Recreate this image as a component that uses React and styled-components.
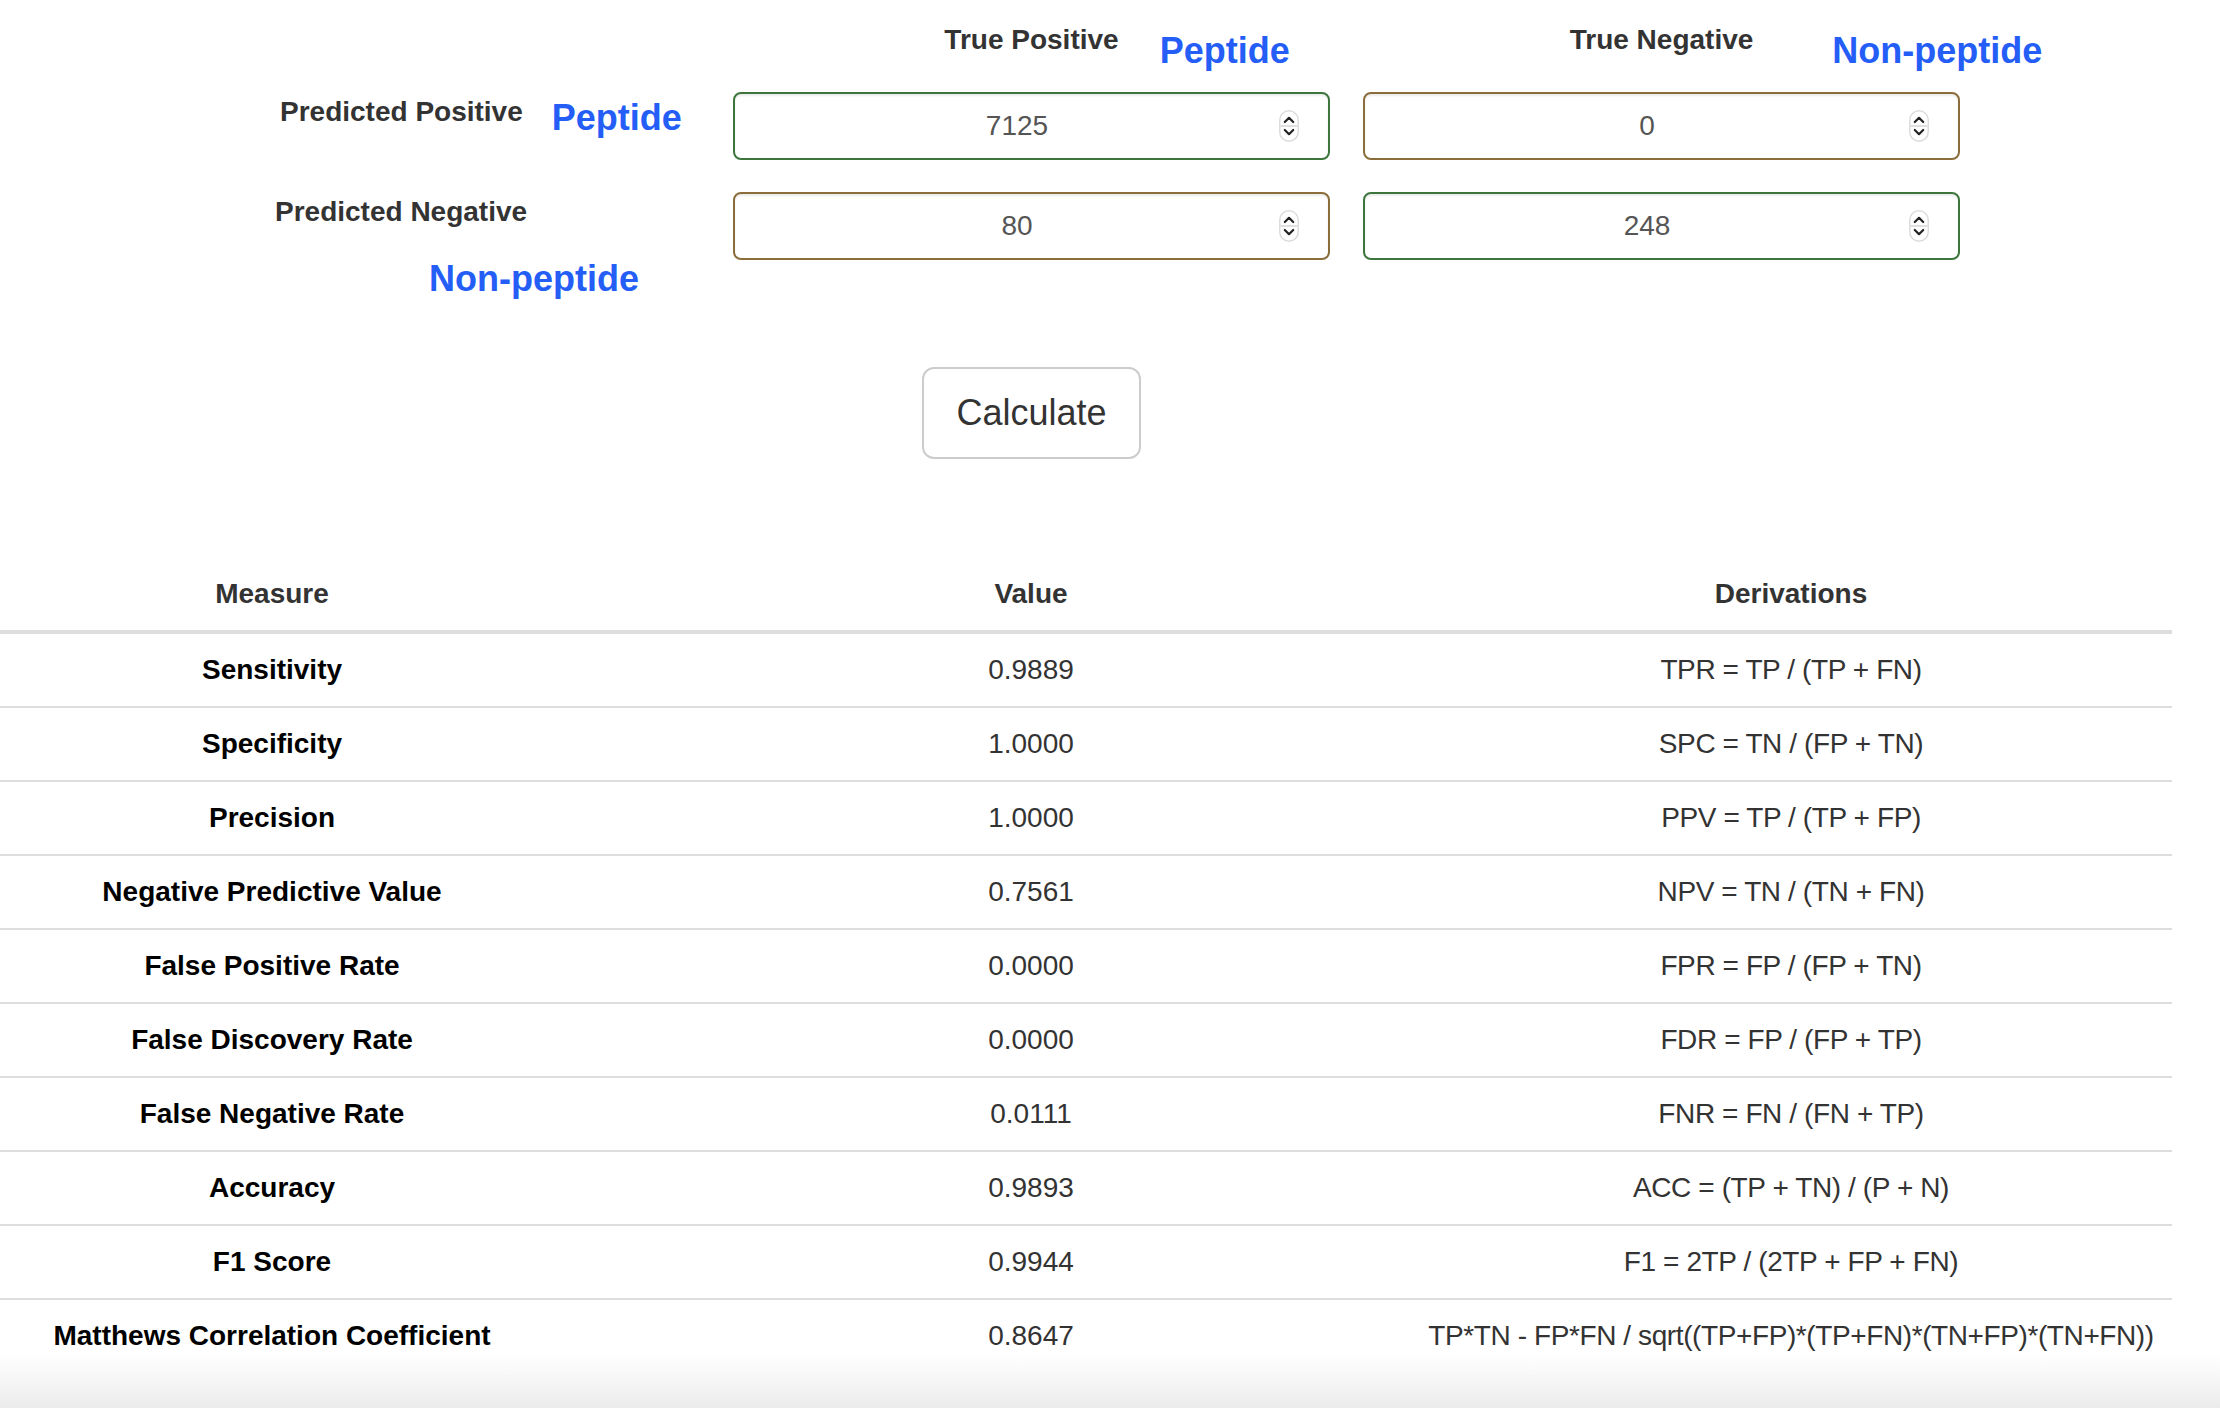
import React from 'react'
import styled, { createGlobalStyle } from 'styled-components'

const GlobalStyle = createGlobalStyle`
  html, body {
    margin: 0;
    padding: 0;
    background: #fff;
  }
  body {
    font-family: "Liberation Sans", Arial, Helvetica, sans-serif;
    color: #333;
  }
  * { box-sizing: border-box; }
`

const cells = [
  { value: 7125, tone: 'success' },
  { value: 0, tone: 'warning' },
  { value: 80, tone: 'warning' },
  { value: 248, tone: 'success' },
]

const measures = [
  ['Sensitivity', '0.9889', 'TPR = TP / (TP + FN)'],
  ['Specificity', '1.0000', 'SPC = TN / (FP + TN)'],
  ['Precision', '1.0000', 'PPV = TP / (TP + FP)'],
  ['Negative Predictive Value', '0.7561', 'NPV = TN / (TN + FN)'],
  ['False Positive Rate', '0.0000', 'FPR = FP / (FP + TN)'],
  ['False Discovery Rate', '0.0000', 'FDR = FP / (FP + TP)'],
  ['False Negative Rate', '0.0111', 'FNR = FN / (FN + TP)'],
  ['Accuracy', '0.9893', 'ACC = (TP + TN) / (P + N)'],
  ['F1 Score', '0.9944', 'F1 = 2TP / (2TP + FP + FN)'],
  ['Matthews Correlation Coefficient', '0.8647', 'TP*TN - FP*FN / sqrt((TP+FP)*(TP+FN)*(TN+FP)*(TN+FN))'],
]

function Spinner() {
  return (
    <SpinBox>
      <svg width="20" height="32" viewBox="0 0 20 32">
        <rect x="0.75" y="0.75" width="18.5" height="30.5" rx="9.25" fill="#fff" stroke="#dcdcdc" strokeWidth="1.5" />
        <line x1="1.5" y1="16" x2="18.5" y2="16" stroke="#d6d6d6" strokeWidth="1.5" />
        <polyline points="5.8,12 10,7.8 14.2,12" fill="none" stroke="#222" strokeWidth="2.2" strokeLinecap="round" strokeLinejoin="round" />
        <polyline points="5.8,20 10,24.2 14.2,20" fill="none" stroke="#222" strokeWidth="2.2" strokeLinecap="round" strokeLinejoin="round" />
      </svg>
    </SpinBox>
  )
}

function CountInput({ value, tone }) {
  return (
    <InputWrap>
      <NumberInput type="number" defaultValue={value} tone={tone} />
      <Spinner />
    </InputWrap>
  )
}

function App() {
  return (
    <Page>
      <GlobalStyle />
      <TopGrid>
        <div />
        <ColHead>
          <HeadText>True Positive</HeadText>
          <Tag gap={41} lift={11}>Peptide</Tag>
        </ColHead>
        <ColHead>
          <HeadText>True Negative</HeadText>
          <Tag gap={79} lift={11}>Non-peptide</Tag>
        </ColHead>

        <RowHead pad={280}>
          <RowLabel>Predicted Positive</RowLabel>
          <Tag gap={29} lift={6}>Peptide</Tag>
        </RowHead>
        <CountInput {...cells[0]} />
        <CountInput {...cells[1]} />

        <RowHead pad={275} stacked>
          <RowLabel>Predicted Negative</RowLabel>
          <Tag gap={154} lift={27}>Non-peptide</Tag>
        </RowHead>
        <CountInput {...cells[2]} />
        <CountInput {...cells[3]} />

        <div />
        <ButtonCell>
          <CalcButton type="button">Calculate</CalcButton>
        </ButtonCell>
        <div />
      </TopGrid>

      <Table>
        <colgroup>
          <col style={{ width: 760 }} />
          <col style={{ width: 758 }} />
          <col style={{ width: 762 }} />
        </colgroup>
        <thead>
          <tr>
            <HeadCell>Measure</HeadCell>
            <HeadCell>Value</HeadCell>
            <HeadCell>Derivations</HeadCell>
          </tr>
        </thead>
        <tbody>
          {measures.map(([name, val, formula]) => (
            <Row key={name}>
              <NameCell>{name}</NameCell>
              <Cell>{val}</Cell>
              <Cell formula>{formula}</Cell>
            </Row>
          ))}
        </tbody>
      </Table>
      <BottomFade />
    </Page>
  )
}

const Page = styled.div`
width:2220px;
min-height:1408px;
overflow:hidden;
position:relative;
padding-top:20px;
`

const TopGrid = styled.div`
display:grid;
grid-template-columns:700px 597px 597px;
grid-template-rows:40px 68px 68px auto;
column-gap:33px;
row-gap:32px;
`

const ColHead = styled.div`
display:grid;
grid-template-columns:minmax(0,1fr) auto minmax(0,1fr);
align-items:start;
`

const HeadText = styled.div`
grid-column:2;
font-size:28px;
line-height:40px;
font-weight:700;
color:#333;
white-space:nowrap;
`

const Tag = styled.div`
justify-self:start;
margin-left:${p => p.gap}px;
margin-top:${p => p.lift}px;
font-size:36px;
line-height:1.1;
font-weight:700;
color:#245ef7;
white-space:nowrap;
`

const RowHead = styled.div`
display:flex;
flex-direction:${p => (p.stacked ? 'column' : 'row')};
align-items:flex-start;
padding-left:${p => p.pad}px;
`

const RowLabel = styled.div`
font-size:28px;
line-height:40px;
font-weight:700;
color:#333;
white-space:nowrap;
`

const InputWrap = styled.div`
position:relative;
height:68px;
`

const NumberInput = styled.input`
display:block;
width:100%;
height:68px;
padding:0 53px 0 24px;
font-family:"Liberation Sans", Arial, Helvetica, sans-serif;
font-size:28px;
line-height:40px;
color:#555;
text-align:center;
background:#fff;
border:2px solid ${p => (p.tone === 'success' ? '#3c763d' : '#8a6d3b')};
border-radius:8px;
box-shadow:inset 0 2px 2px rgba(0,0,0,0.075);
outline:none;
-moz-appearance:textfield;
&::-webkit-inner-spin-button,
&::-webkit-outer-spin-button{
  -webkit-appearance:none;
  margin:0;
}
`

const SpinBox = styled.div`
position:absolute;
right:31px;
top:18px;
width:20px;
height:32px;
pointer-events:none;
svg{ display:block; }
`

const ButtonCell = styled.div`
display:flex;
justify-content:center;
padding-top:75px;
`

const CalcButton = styled.button`
font-family:"Liberation Sans", Arial, Helvetica, sans-serif;
font-size:36px;
line-height:48px;
padding:20px 32px;
color:#333;
background:#fff;
border:2px solid #ccc;
border-radius:12px;
cursor:pointer;
`

const Table = styled.table`
margin-top:99px;
margin-left:-108px;
width:2280px;
table-layout:fixed;
border-collapse:separate;
border-spacing:0;
text-align:center;
font-size:28px;
line-height:40px;
`

const HeadCell = styled.th`
padding:16px;
font-weight:700;
color:#333;
border-bottom:4px solid #ddd;
vertical-align:bottom;
`

const Row = styled.tr`
& + & > *{
  border-top:2px solid #ddd;
}
`

const NameCell = styled.th`
padding:16px;
font-weight:700;
color:#000;
white-space:nowrap;
`

const Cell = styled.td`
padding:16px;
color:#333;
white-space:nowrap;
letter-spacing:${p => (p.formula ? '-0.4px' : 'normal')};
`

const BottomFade = styled.div`
position:fixed;
left:0;
right:0;
bottom:0;
height:54px;
background:linear-gradient(to bottom, rgba(236,236,236,0), #ebebeb);
pointer-events:none;
`

export default App
